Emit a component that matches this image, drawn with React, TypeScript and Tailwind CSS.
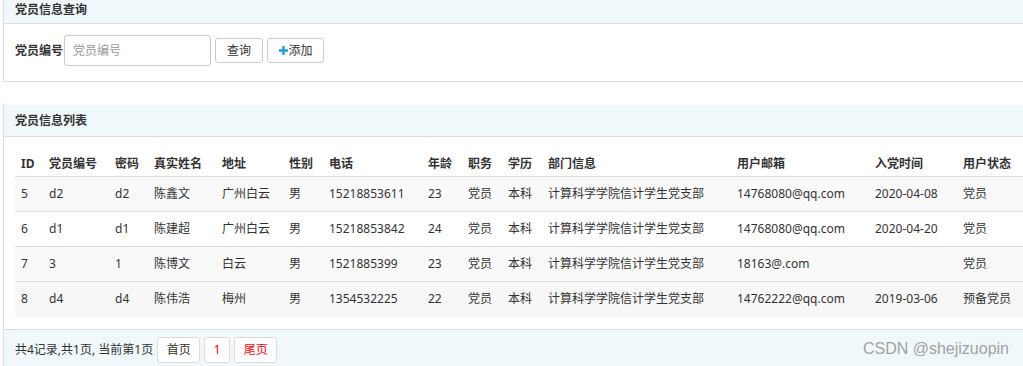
import React from 'react';

interface Member {
  id: number;
  code: string;
  pwd: string;
  name: string;
  addr: string;
  sex: string;
  phone: string;
  age: number;
  duty: string;
  edu: string;
  dept: string;
  email: string;
  joined: string;
  status: string;
}

const members: Member[] = [
  { id: 5, code: 'd2', pwd: 'd2', name: '陈鑫文', addr: '广州白云', sex: '男', phone: '15218853611', age: 23, duty: '党员', edu: '本科', dept: '计算科学学院信计学生党支部', email: '14768080@qq.com', joined: '2020-04-08', status: '党员' },
  { id: 6, code: 'd1', pwd: 'd1', name: '陈建超', addr: '广州白云', sex: '男', phone: '15218853842', age: 24, duty: '党员', edu: '本科', dept: '计算科学学院信计学生党支部', email: '14768080@qq.com', joined: '2020-04-20', status: '党员' },
  { id: 7, code: '3', pwd: '1', name: '陈博文', addr: '白云', sex: '男', phone: '1521885399', age: 23, duty: '党员', edu: '本科', dept: '计算科学学院信计学生党支部', email: '18163@.com', joined: '', status: '党员' },
  { id: 8, code: 'd4', pwd: 'd4', name: '陈伟浩', addr: '梅州', sex: '男', phone: '1354532225', age: 22, duty: '党员', edu: '本科', dept: '计算科学学院信计学生党支部', email: '14762222@qq.com', joined: '2019-03-06', status: '预备党员' },
];

// column widths measured from the screenshot
const cols = [
  { title: 'ID', w: 28 },
  { title: '党员编号', w: 66 },
  { title: '密码', w: 39 },
  { title: '真实姓名', w: 68 },
  { title: '地址', w: 67 },
  { title: '性别', w: 40 },
  { title: '电话', w: 99 },
  { title: '年龄', w: 40 },
  { title: '职务', w: 40 },
  { title: '学历', w: 40 },
  { title: '部门信息', w: 189 },
  { title: '用户邮箱', w: 138 },
  { title: '入党时间', w: 88 },
  { title: '用户状态', w: 70 },
];

const rowBg = ['bg-[#f9f9f9]', 'bg-white', 'bg-[#f9f9f9]', 'bg-[#f7f7f7]'];

export default function App() {
  return (
    <div
      className="relative w-[1023px] h-[366px] overflow-hidden bg-white text-[12px] text-[#333]"
      style={{ fontFamily: '"Noto Sans", "Noto Sans CJK SC", sans-serif' }}
    >
      <div className="pl-[3px]">
        {/* 查询 panel */}
        <div className="w-[1040px] border-x border-b border-[#ddd] rounded-b-[3px]">
          <div className="h-[24px] bg-[#f1f8fb] border-b border-[#ddd] pl-[11px] flex items-center font-bold leading-none pb-[4px]">
            党员信息查询
          </div>
          <div className="h-[57px] pl-[11px] pb-[4px] flex items-center">
            <span className="font-bold">党员编号</span>
            <input
              className="ml-[1px] w-[147px] h-[31px] border border-[#ccc] rounded-[3px] px-[8px] text-[12px] outline-none placeholder:text-[#999]"
              placeholder="党员编号"
            />
            <button className="ml-[4px] w-[48px] h-[25px] border border-[#ccc] rounded-[3px] bg-white">查询</button>
            <button className="ml-[4px] w-[57px] h-[25px] border border-[#ccc] rounded-[3px] bg-white flex items-center justify-center">
              <svg width="9" height="9" viewBox="0 0 9 9" className="mr-[1px]">
                <path d="M3.3 0h2.4v3.3H9v2.4H5.7V9H3.3V5.7H0V3.3h3.3z" fill="#1e9fe0" />
              </svg>
              添加
            </button>
          </div>
        </div>

        {/* 列表 panel */}
        <div className="mt-[23px] w-[1040px] border-x border-[#ddd]">
          <div className="h-[32px] bg-[#f1f8fb] border-b border-[#ddd] pl-[11px] flex items-center font-bold">
            党员信息列表
          </div>
          <div className="pl-[11px] pt-[15px] pb-[12px] border-b border-[#ddd]">
            <table className="table-fixed border-collapse w-[1012px]">
              <colgroup>
                {cols.map((c) => (
                  <col key={c.title} style={{ width: c.w }} />
                ))}
              </colgroup>
              <thead>
                <tr className="border-b border-[#ddd]">
                  {cols.map((c) => (
                    <th key={c.title} className="text-left font-bold pl-[6px] pt-[4px] pb-[4px] leading-[16px] whitespace-nowrap">
                      {c.title}
                    </th>
                  ))}
                </tr>
              </thead>
              <tbody>
                {members.map((m, i) => (
                  <tr key={m.id} className={`${rowBg[i]} ${i > 0 ? 'border-t border-[#ddd]' : ''} h-[35px]`}>
                    {[m.id, m.code, m.pwd, m.name, m.addr, m.sex, m.phone, m.age, m.duty, m.edu, m.dept, m.email, m.joined, m.status].map((v, j) => (
                      <td key={j} className="pl-[6px] whitespace-nowrap leading-[16px]">{v}</td>
                    ))}
                  </tr>
                ))}
              </tbody>
            </table>
          </div>
          <div className="h-[40px] bg-[#f1f8fb] pl-[11px] flex items-center pt-[1px]">
            <span>共4记录,共1页, 当前第1页</span>
            <button className="ml-[4px] w-[43px] h-[26px] border border-[#ddd] rounded-[3px] bg-white">首页</button>
            <button className="ml-[4px] w-[26px] h-[26px] border border-[#ddd] rounded-[3px] bg-white text-[#f00]">1</button>
            <button className="ml-[4px] w-[43px] h-[26px] border border-[#ddd] rounded-[3px] bg-white text-[#f00]">尾页</button>
          </div>
        </div>
      </div>

      {/* watermark */}
      <div className="absolute right-[14px] bottom-[9px] text-[16px] leading-none text-[#999] opacity-90" style={{ fontFamily: '"Liberation Sans", sans-serif' }}>
        CSDN @shejizuopin
      </div>
    </div>
  );
}
